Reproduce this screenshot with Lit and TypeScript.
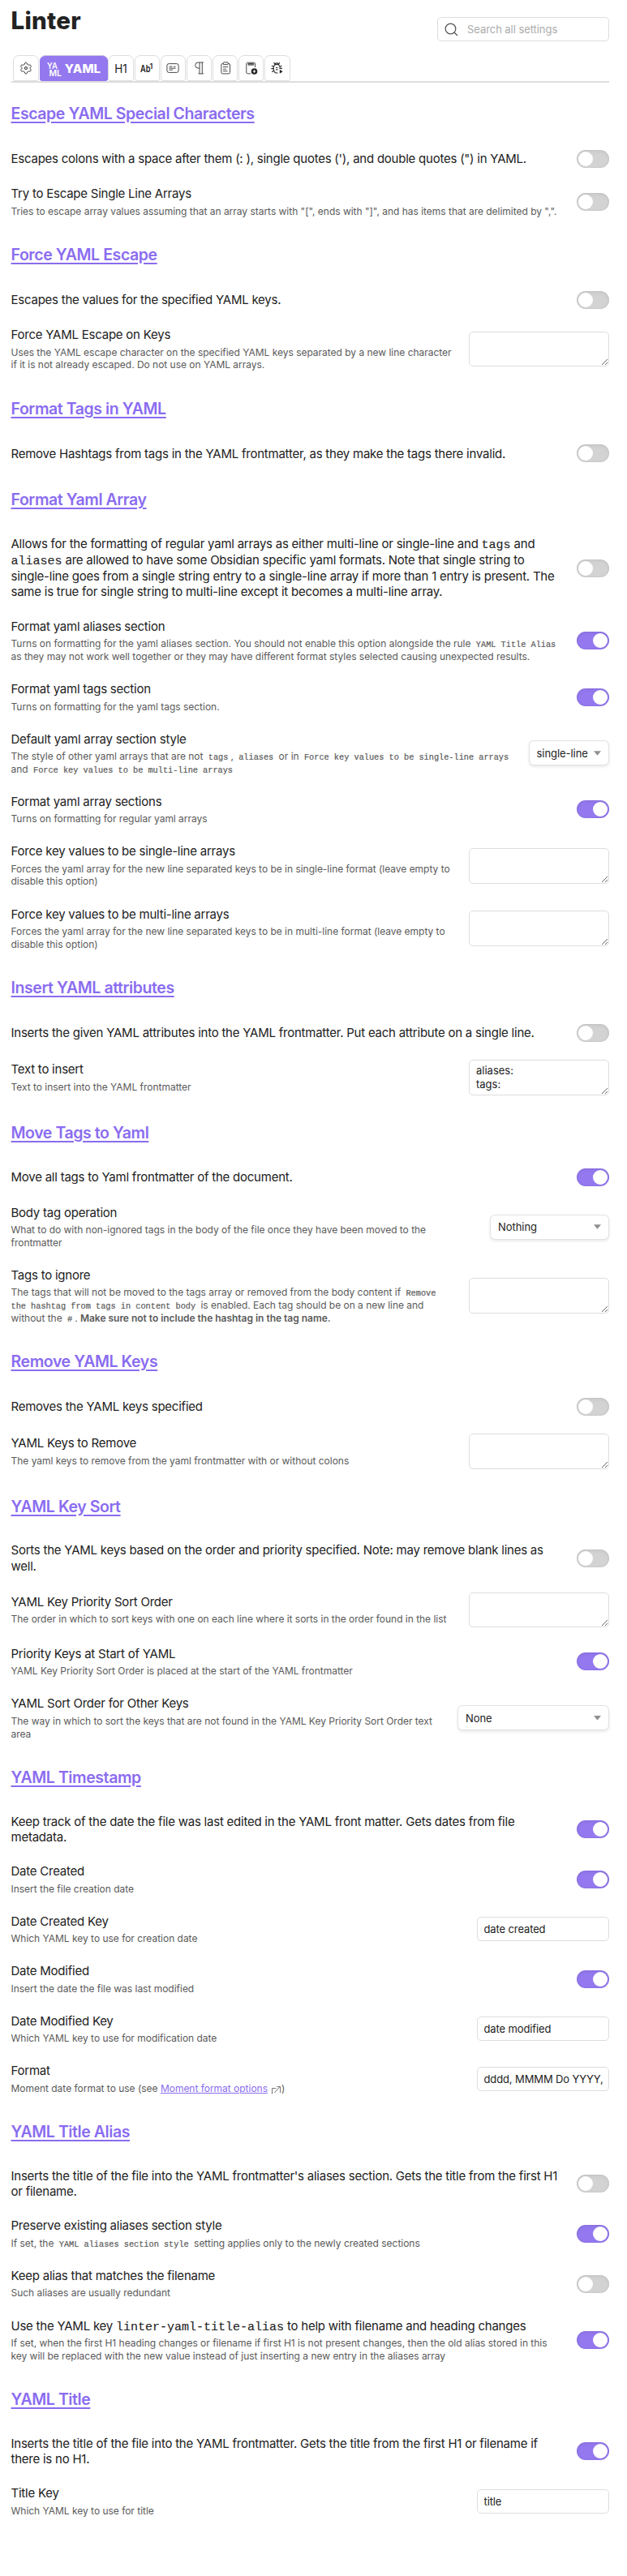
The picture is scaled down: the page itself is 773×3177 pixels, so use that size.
import { LitElement, html, svg, css, nothing, TemplateResult } from "lit";
import { customElement, property } from "lit/decorators.js";

type Control =
  | { kind: "toggle"; on: boolean }
  | { kind: "area"; value?: string }
  | { kind: "text"; value: string }
  | { kind: "select"; value: string; size: "s" | "m" | "l" };
type Text = string | TemplateResult;
interface Setting { name: Text; desc?: Text; control: Control; loose?: boolean }
interface Section { title: string; items: Setting[] }

const on: Control = { kind: "toggle", on: true };
const off: Control = { kind: "toggle", on: false };
const area: Control = { kind: "area" };

const externalIcon = html`<svg class="ext" width="13" height="11" viewBox="0 0 13 11" fill="none" stroke="#777" stroke-width="1">
  <path d="M1.5 10.5V3.5h5M4.5 9L11 1.5M7.5 1.5H11.5V9" /></svg>`;

const sections: Section[] = [
  { title: "Escape YAML Special Characters", items: [
    { name: `Escapes colons with a space after them (: ), single quotes ('), and double quotes (") in YAML.`, control: off },
    { name: "Try to Escape Single Line Arrays", desc: `Tries to escape array values assuming that an array starts with "[", ends with "]", and has items that are delimited by ",".`, control: off },
  ] },
  { title: "Force YAML Escape", items: [
    { name: "Escapes the values for the specified YAML keys.", control: off },
    { name: "Force YAML Escape on Keys", desc: html`Uses the YAML escape character on the specified YAML keys separated by a new line character<br>if it is not already escaped. Do not use on YAML arrays.`, control: area },
  ] },
  { title: "Format Tags in YAML", items: [
    { name: "Remove Hashtags from tags in the YAML frontmatter, as they make the tags there invalid.", control: off },
  ] },
  { title: "Format Yaml Array", items: [
    { loose: true, name: html`Allows for the formatting of regular yaml arrays as either multi-line or single-line and <code>tags</code> and<br><code>aliases</code> are allowed to have some Obsidian specific yaml formats. Note that single string to<br>single-line goes from a single string entry to a single-line array if more than 1 entry is present. The<br>same is true for single string to multi-line except it becomes a multi-line array.`, control: off },
    { name: "Format yaml aliases section", desc: html`Turns on formatting for the yaml aliases section. You should not enable this option alongside the rule <code>YAML Title Alias</code><br>as they may not work well together or they may have different format styles selected causing unexpected results.`, control: on },
    { name: "Format yaml tags section", desc: "Turns on formatting for the yaml tags section.", control: on },
    { name: "Default yaml array section style", desc: html`The style of other yaml arrays that are not <code>tags</code>, <code>aliases</code> or in <code>Force key values to be single-line arrays</code><br>and <code>Force key values to be multi-line arrays</code>`, control: { kind: "select", value: "single-line", size: "s" } },
    { name: "Format yaml array sections", desc: "Turns on formatting for regular yaml arrays", control: on },
    { name: "Force key values to be single-line arrays", desc: html`Forces the yaml array for the new line separated keys to be in single-line format (leave empty to<br>disable this option)`, control: area },
    { name: "Force key values to be multi-line arrays", desc: html`Forces the yaml array for the new line separated keys to be in multi-line format (leave empty to<br>disable this option)`, control: area },
  ] },
  { title: "Insert YAML attributes", items: [
    { name: "Inserts the given YAML attributes into the YAML frontmatter. Put each attribute on a single line.", control: off },
    { name: "Text to insert", desc: "Text to insert into the YAML frontmatter", control: { kind: "area", value: "aliases:\ntags:" } },
  ] },
  { title: "Move Tags to Yaml", items: [
    { name: "Move all tags to Yaml frontmatter of the document.", control: on },
    { name: "Body tag operation", desc: html`What to do with non-ignored tags in the body of the file once they have been moved to the<br>frontmatter`, control: { kind: "select", value: "Nothing", size: "m" } },
    { name: "Tags to ignore", desc: html`The tags that will not be moved to the tags array or removed from the body content if <code>Remove<br>the hashtag from tags in content body</code> is enabled. Each tag should be on a new line and<br>without the <code>#</code>. <b>Make sure not to include the hashtag in the tag name.</b>`, control: area },
  ] },
  { title: "Remove YAML Keys", items: [
    { name: "Removes the YAML keys specified", control: off },
    { name: "YAML Keys to Remove", desc: "The yaml keys to remove from the yaml frontmatter with or without colons", control: area },
  ] },
  { title: "YAML Key Sort", items: [
    { name: html`Sorts the YAML keys based on the order and priority specified. Note: may remove blank lines as<br>well.`, control: off },
    { name: "YAML Key Priority Sort Order", desc: "The order in which to sort keys with one on each line where it sorts in the order found in the list", control: area },
    { name: "Priority Keys at Start of YAML", desc: "YAML Key Priority Sort Order is placed at the start of the YAML frontmatter", control: on },
    { name: "YAML Sort Order for Other Keys", desc: html`The way in which to sort the keys that are not found in the YAML Key Priority Sort Order text<br>area`, control: { kind: "select", value: "None", size: "l" } },
  ] },
  { title: "YAML Timestamp", items: [
    { name: html`Keep track of the date the file was last edited in the YAML front matter. Gets dates from file<br>metadata.`, control: on },
    { name: "Date Created", desc: "Insert the file creation date", control: on },
    { name: "Date Created Key", desc: "Which YAML key to use for creation date", control: { kind: "text", value: "date created" } },
    { name: "Date Modified", desc: "Insert the date the file was last modified", control: on },
    { name: "Date Modified Key", desc: "Which YAML key to use for modification date", control: { kind: "text", value: "date modified" } },
    { name: "Format", desc: html`Moment date format to use (see <a>Moment format options</a>${externalIcon})`, control: { kind: "text", value: "dddd, MMMM Do YYYY, h:mm:ss a" } },
  ] },
  { title: "YAML Title Alias", items: [
    { name: html`Inserts the title of the file into the YAML frontmatter's aliases section. Gets the title from the first H1<br>or filename.`, control: off },
    { name: "Preserve existing aliases section style", desc: html`If set, the <code>YAML aliases section style</code> setting applies only to the newly created sections`, control: on },
    { name: "Keep alias that matches the filename", desc: "Such aliases are usually redundant", control: off },
    { name: html`Use the YAML key <code>linter-yaml-title-alias</code> to help with filename and heading changes`, desc: html`If set, when the first H1 heading changes or filename if first H1 is not present changes, then the old alias stored in this<br>key will be replaced with the new value instead of just inserting a new entry in the aliases array`, control: on },
  ] },
  { title: "YAML Title", items: [
    { name: html`Inserts the title of the file into the YAML frontmatter. Gets the title from the first H1 or filename if<br>there is no H1.`, control: on },
    { name: "Title Key", desc: "Which YAML key to use for title", control: { kind: "text", value: "title" } },
  ] },
];

const icons = {
  gear: svg`<path stroke-width="1" d="M9.150 1.960L9.600 3.300A5 5 0 0 1 11.300 4.250L12.700 3.950A1 1 0 0 1 13.600 4.400L14.200 5.500A1 1 0 0 1 14.100 6.500L13.100 7.600V8.800L14.100 9.700A1 1 0 0 1 14.200 10.700L13.600 11.700A1 1 0 0 1 12.700 12.150L11.300 11.850A5 5 0 0 1 9.700 12.800L9.200 14.200A1 1 0 0 1 8.400 14.900H7.500A1 1 0 0 1 6.700 14.200L6.300 12.800A5 5 0 0 1 4.700 11.850L3.200 12.150A1 1 0 0 1 2.300 11.700L1.800 10.700A1 1 0 0 1 1.900 9.700L2.900 8.700V7.500L1.900 6.500A1 1 0 0 1 1.800 5.500L2.300 4.400A1 1 0 0 1 3.200 3.950L4.700 4.250A5 5 0 0 1 6.300 3.300L6.700 1.900A1 1 0 0 1 7.500 1.200H8.400A1 1 0 0 1 9.150 1.960Z"/><circle cx="8" cy="8" r="1.500" stroke-width="1.100"/>`,
  h1: svg`<text class="glyph" x="0.300" y="13.500" font-size="15" textLength="15.500" lengthAdjust="spacingAndGlyphs">H1</text>`,
  ab: svg`<text class="glyph strong" x="0" y="13" font-size="12" textLength="12.500" lengthAdjust="spacingAndGlyphs">Ab</text><text class="glyph strong" x="11.500" y="8.500" font-size="9">1</text>`,
  card: svg`<rect x=".9" y="2.600" width="14.200" height="10.800" rx="2.300"/><path d="M3.500 6.200h4M9 6.200h2.500M3.500 8.200h8M3.500 10.200h4.500"/>`,
  pilcrow: svg`<path d="M13 1H6.200a3.500 3.500 0 0 0 0 7h1.800M8 1v13.800M11.300 1v13.800M6.500 14.900H13"/>`,
  clipboard: svg`<rect x="2.900" y="2.500" width="10.600" height="12.400" rx="1.500"/><rect x="5.200" y=".9" width="6" height="2.700" rx=".8" fill="#fff"/><path d="M5 6.500h6M5 9.200h4M5 11.700h5.500"/>`,
  pageAdd: svg`<path d="M7 14.800H3.600a1.800 1.800 0 0 1-1.800-1.800V3a1.800 1.800 0 0 1 1.800-1.800h7.200A1.800 1.800 0 0 1 12.600 3v4"/><path d="M4 2.500h6.600v1.600H4z" fill="#999"/><circle cx="11.500" cy="12" r="3.800" fill="#222" stroke="none"/><path d="M11.500 10.200v3.600M9.700 12h3.600" stroke="#fff" stroke-width="1.100"/>`,
  bug: svg`<g stroke-width="1.200"><path d="M8.500 13.800A4 4.200 0 0 1 3.300 10V7.200a3.900 3.900 0 0 1 7.800 0V9"/><path d="M4.800 4.200a2.400 2.400 0 0 1 4.800 0M4.700 2.800L3.600 1.200M9.700 2.800l1.100-1.600M3.300 6.300L1 5M3.300 8.700H.4M3.500 11.200L1.200 12.800M11.100 6.300L13.400 5M11.100 8.400H14M6 7.500h2.500M6 9.800h2.500"/></g><path d="M10.800 9.800v5l3.800-2.500z" fill="#222" stroke="none"/>`,
};

@customElement("setting-row")
class SettingRow extends LitElement {
  @property({ attribute: false }) item!: Setting;

  static styles = css`
    :host { display: flex; align-items: center; justify-content: space-between; padding: 11.25px 0; }
    * { box-sizing: border-box; }
    .info { white-space: nowrap; min-width: 0; }
    .name { font-size: 15px; line-height: 19.5px; letter-spacing: -0.235px; color: #222; }
    .name.loose { line-height: 19.9px; }
    .desc { font-size: 12px; line-height: 15.6px; letter-spacing: -0.02px; color: #5a5a5a; margin-top: 4px; }
    code { font-family: "Liberation Mono", monospace; letter-spacing: 0; line-height: 0; }
    .name code { font-size: 15px; -webkit-text-stroke: 0.1px currentColor; }
    .desc code { font-size: 10.25px; padding: 0 3px; -webkit-text-stroke: 0.2px currentColor; }
    a { color: #8a6cf0; text-decoration: underline; }
    b { font-weight: 600; }
    .ext { margin: -4px 0 0 4px; vertical-align: -3px; }
    .control { flex: none; display: flex; }
    .toggle { display: block; width: 40px; height: 22px; padding: 2px; border-radius: 11px; background: #d3d3d3; box-shadow: inset 0 0 2px rgba(0, 0, 0, .13), inset 0 2px 5px rgba(0, 0, 0, .05); }
    .toggle i { display: block; width: 18px; height: 18px; border-radius: 50%; background: #fff; }
    .toggle.on { background: #9478ef; padding-left: 20px; }
    textarea, input { display: block; margin: 0; font: 13px/17px Inter, sans-serif; color: #222; background: #fff; border: 1px solid #ddd; border-radius: 5px; outline: none; }
    textarea { width: 173px; height: 43.7px; padding: 4px 8px; resize: both; overflow: hidden; }
    input { width: 163.5px; height: 30px; padding: 0 5px 0 8px; letter-spacing: -0.12px; }
    .select { display: flex; align-items: center; justify-content: space-between; height: 29px; padding: 0 9px; border-radius: 5px; font-size: 13px; color: #222; letter-spacing: -0.05px; background: #fff; box-shadow: 0 0 0 1px #e2e2e2, 0 2px 4px rgba(0, 0, 0, .13); margin-right: 1px; }
    .s { width: 97.5px; }
    .m { width: 145px; }
    .l { width: 185px; }
    .arrow { width: 9px; height: 5.5px; background: #909090; clip-path: polygon(0 0, 100% 0, 50% 100%); }
  `;

  private control(c: Control) {
    switch (c.kind) {
      case "toggle": return html`<span class="toggle ${c.on ? "on" : ""}"><i></i></span>`;
      case "area": return html`<textarea .value=${c.value ?? ""}></textarea>`;
      case "text": return html`<input type="text" .value=${c.value}>`;
      case "select": return html`<span class="select ${c.size}">${c.value}<span class="arrow"></span></span>`;
    }
  }

  render() {
    const { name, desc, control, loose } = this.item;
    return html`<div class="info"><div class="name ${loose ? "loose" : ""}">${name}</div>${desc ? html`<div class="desc">${desc}</div>` : nothing}</div>
      <div class="control">${this.control(control)}</div>`;
  }
}

@customElement("app-root")
class AppRoot extends LitElement {
  static styles = css`
    :host { display: block; box-sizing: border-box; min-height: 3177px; padding: 0 22px 0 13.5px; background: #fff; color: #222; font-family: Inter, "Liberation Sans", sans-serif; }
    * { box-sizing: border-box; }
    header { display: flex; justify-content: space-between; height: 68px; }
    h1 { margin: 7px 0 0; font-size: 29.5px; line-height: 36px; font-weight: 800; letter-spacing: 0.25px; }
    .search { display: flex; align-items: center; width: 212px; height: 30px; margin-top: 21px; padding-left: 8px; gap: 11px; border: 1px solid #ddd; border-radius: 5px; font-size: 13px; letter-spacing: -0.06px; color: #ababab; }
    nav { display: flex; gap: 0.6px; padding-left: 2.8px; height: 34px; border-bottom: 2px solid #ddd; }
    .tab { display: flex; align-items: center; justify-content: center; width: 31.5px; height: 31.5px; border: 1px solid #ddd; border-radius: 7px 7px 3px 3px; background: #fff; }
    .tab svg { display: block; fill: none; stroke: #333; stroke-width: .9; overflow: visible; }
    .glyph { font-family: Inter, sans-serif; fill: #222; stroke: none; }
    .strong { font-weight: 600; }
    .active { width: 84px; margin-left: 0.5px; gap: 4px; border: 0; height: 32px; background: #9478ef; color: #fff; font-size: 15px; font-weight: 800; border-top: 1px solid #ccc4e0; }
    .active svg { stroke: none; }
    .active .glyph { fill: #fff; font-weight: 600; }
    main { padding-top: 3.6px; }
    h2 { margin: 0; padding-top: 21.6px; height: 67.9px; font-size: 19.5px; line-height: 26px; font-weight: 600; letter-spacing: -0.42px; color: #8a6cf0; text-decoration: underline; text-decoration-thickness: 1.5px; text-underline-offset: 3px; }
  `;

  private tab(icon: ReturnType<typeof svg>) {
    return html`<div class="tab"><svg width="16" height="16" viewBox="0 0 16 16">${icon}</svg></div>`;
  }

  render() {
    return html`
      <header>
        <h1>Linter</h1>
        <div class="search">
          <svg width="17" height="17" viewBox="0 0 17 17" fill="none" stroke="#555" stroke-width="1.300"><circle cx="7.500" cy="7.500" r="6.300"/><path d="M12 12l4 4"/></svg>
          <span>Search all settings</span>
        </div>
      </header>
      <nav>
        ${this.tab(icons.gear)}
        <div class="tab active"><svg width="18" height="18" viewBox="0 0 18 18"><text class="glyph" x="0" y="8.500" font-size="10.500" textLength="13" lengthAdjust="spacingAndGlyphs">YA</text><text class="glyph" x="2.500" y="17.500" font-size="10.500" textLength="15.500" lengthAdjust="spacingAndGlyphs">ML</text></svg><span>YAML</span></div>
        ${this.tab(icons.h1)}${this.tab(icons.ab)}${this.tab(icons.card)}${this.tab(icons.pilcrow)}${this.tab(icons.clipboard)}${this.tab(icons.pageAdd)}${this.tab(icons.bug)}
      </nav>
      <main>${sections.map(s => html`<h2>${s.title}</h2>${s.items.map(i => html`<setting-row .item=${i}></setting-row>`)}`)}</main>`;
  }
}
